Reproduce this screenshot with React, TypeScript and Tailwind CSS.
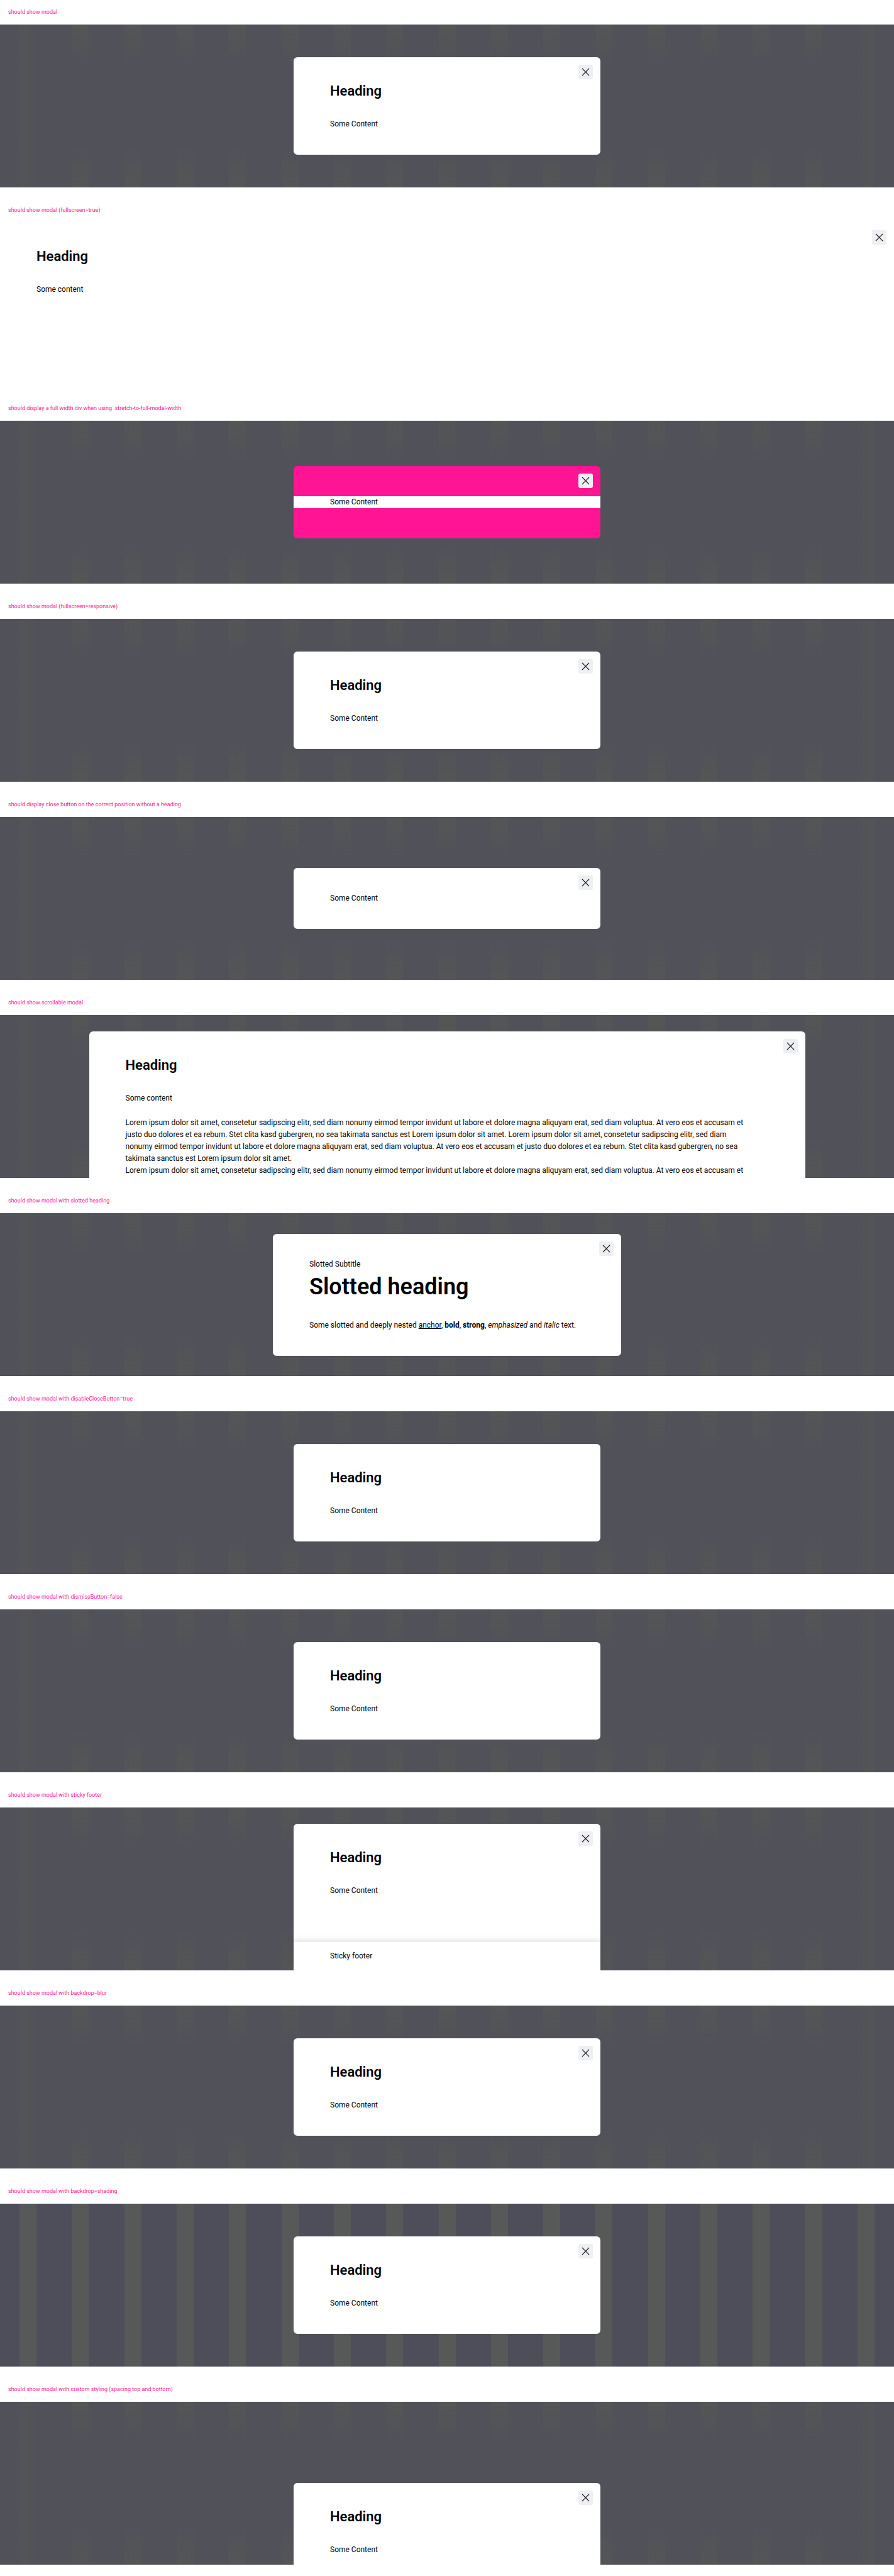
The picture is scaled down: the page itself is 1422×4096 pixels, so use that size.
import React from "react";

const LOREM_START =
  "Lorem ipsum dolor sit amet, consetetur sadipscing elitr, sed diam nonumy eirmod tempor invidunt ut labore et dolore magna aliquyam erat, sed diam voluptua. At vero eos et accusam et";
const LOREM = `${LOREM_START} justo duo dolores et ea rebum. Stet clita kasd gubergren, no sea takimata sanctus est Lorem ipsum dolor sit amet. ${LOREM_START} justo duo dolores et ea rebum. Stet clita kasd gubergren, no sea takimata sanctus est Lorem ipsum dolor sit amet.`;

function CloseButton() {
  return (
    <button
      type="button"
      aria-label="Dismiss modal"
      className="absolute top-3 right-3 grid size-[23px] place-items-center rounded-[3px] bg-[#eeeff2] text-[#010205]"
    >
      <svg viewBox="0 0 24 24" className="size-[19px]" fill="none" stroke="currentColor" strokeWidth="1.4" aria-hidden="true">
        <path d="M5 5 19 19M19 5 5 19" />
      </svg>
    </button>
  );
}

function Backdrop({ blur }: { blur: boolean }) {
  return (
    <div
      aria-hidden="true"
      className={
        blur
          ? "absolute inset-0 flex justify-between bg-[#51515a] px-[31px]"
          : "absolute inset-0 flex justify-between bg-[#4e4e5a] px-[31px]"
      }
    >
      {Array.from({ length: 17 }, (_, i) => (
        <span
          key={i}
          className={
            !blur
              ? "w-[27px] bg-[#575958]"
              : i === 0
                ? "w-[27px] bg-linear-to-r from-[#535457] from-40% to-[#515259]"
                : i === 16
                  ? "w-[27px] bg-linear-to-l from-[#535457] from-40% to-[#515259]"
                  : "w-[27px] bg-[linear-gradient(to_bottom,#545556,#525457_13%,#51515a_24%,#51515a_76%,#525457_87%,#545556)]"
          }
        />
      ))}
    </div>
  );
}

const Title = ({ children }: { children: React.ReactNode }) => (
  <h2 className="h-[39px] px-[13px] pt-[12px] text-[9px] leading-[14px] text-[#ff1493]">{children}</h2>
);

type CaseProps = {
  title: string;
  blur?: boolean;
  align?: string;
  children: React.ReactNode;
};

function Case({ title, blur = true, align = "items-center", children }: CaseProps) {
  return (
    <section className="pb-[17px]">
      <Title>{title}</Title>
      <div className={`relative flex h-[259px] justify-center overflow-hidden ${align}`}>
        <Backdrop blur={blur} />
        {children}
      </div>
    </section>
  );
}

type DialogProps = { close?: boolean; className?: string; children: React.ReactNode };

function Dialog({ close = true, className = "w-[488px] rounded-[6px]", children }: DialogProps) {
  return (
    <div role="dialog" className={`relative bg-white px-[58px] py-[39px] ${className}`}>
      {close && <CloseButton />}
      {children}
    </div>
  );
}

const Heading = () => <h3 className="mb-[28px] text-[22px] leading-[30px] font-semibold">Heading</h3>;
const Text = ({ children }: { children: React.ReactNode }) => <p className="text-[12px] leading-[19px]">{children}</p>;

function Basic({ close = true }: { close?: boolean }) {
  return (
    <Dialog close={close}>
      <Heading />
      <Text>Some Content</Text>
    </Dialog>
  );
}

export default function App() {
  return (
    <main className="bg-white pb-px font-['Roboto',sans-serif] text-[#010205]">
      <Case title="should show modal">
        <Basic />
      </Case>

      <section className="pb-[17px]">
        <Title>should show modal (fullscreen=true)</Title>
        <div role="dialog" className="relative h-[259px] bg-white px-[58px] py-[39px]">
          <CloseButton />
          <Heading />
          <Text>Some content</Text>
        </div>
      </section>

      <Case title="should display a full width div when using .stretch-to-full-modal-width">
        <div role="dialog" className="relative w-[488px] rounded-[6px] bg-[#ff1493] py-[48px]">
          <CloseButton />
          <div className="bg-white px-[58px]">
            <Text>Some Content</Text>
          </div>
        </div>
      </Case>

      <Case title="should show modal (fullscreen=responsive)">
        <Basic />
      </Case>

      <Case title="should display close button on the correct position without a heading">
        <Dialog>
          <Text>Some Content</Text>
        </Dialog>
      </Case>

      <Case title="should show scrollable modal" align="items-stretch pt-[26px]">
        <Dialog className="w-[1139px] rounded-t-[6px]">
          <Heading />
          <Text>Some content</Text>
          <div className="mt-5 max-w-[1000px]">
            <Text>{LOREM}</Text>
            <Text>{LOREM_START}</Text>
          </div>
        </Dialog>
      </Case>

      <Case title="should show modal with slotted heading">
        <Dialog className="w-[554px] rounded-[6px]">
          <Text>Slotted Subtitle</Text>
          <h3 className="mb-[26px] text-[36px] leading-[52px] font-semibold">Slotted heading</h3>
          <Text>
            Some slotted and deeply nested{" "}
            <a href="#" className="underline">
              anchor
            </a>
            , <b className="font-bold">bold</b>, <strong className="font-bold">strong</strong>, <em>emphasized</em> and <i>italic</i> text.
          </Text>
        </Dialog>
      </Case>

      <Case title="should show modal with disableCloseButton=true">
        <Basic close={false} />
      </Case>
      <Case title="should show modal with dismissButton=false">
        <Basic close={false} />
      </Case>

      <Case title="should show modal with sticky footer" align="items-stretch pt-[26px]">
        <div role="dialog" className="relative flex w-[488px] flex-col rounded-t-[6px] bg-white">
          <CloseButton />
          <div className="grow px-[58px] pt-[39px]">
            <Heading />
            <Text>Some Content</Text>
          </div>
          <footer className="bg-white px-[58px] py-[13px] shadow-[0_-4px_8px_rgba(0,0,0,0.1)]">
            <Text>Sticky footer</Text>
          </footer>
        </div>
      </Case>

      <Case title="should show modal with backdrop=blur">
        <Basic />
      </Case>
      <Case title="should show modal with backdrop=shading" blur={false}>
        <Basic />
      </Case>
      <Case title="should show modal with custom styling (spacing top and bottom)" align="items-start pt-[129px]">
        <Basic />
      </Case>
    </main>
  );
}
